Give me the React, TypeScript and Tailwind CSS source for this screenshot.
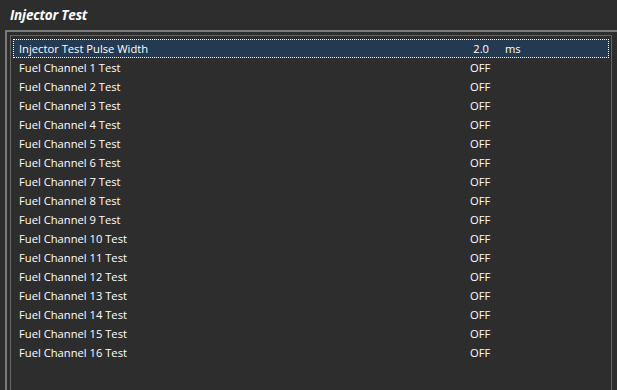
const rows: { label: string; value: string; unit?: string }[] = [
  { label: 'Injector Test Pulse Width', value: '2.0', unit: 'ms' },
  ...Array.from({ length: 16 }, (_, i) => ({
    label: `Fuel Channel ${i + 1} Test`,
    value: 'OFF'
  }))
]

export default function App() {
  return (
    <div
      className="h-[390px] w-[617px] overflow-hidden bg-[#2d2d2d] text-white"
      style={{ fontFamily: '"Open Sans", "Noto Sans", sans-serif' }}
    >
      <div className="flex h-[30px] items-center pl-[10px] text-[13.5px] font-bold italic tracking-[-0.2px]">
        Injector Test
      </div>
      <div className="ml-[5px] h-[360px] border-l-2 border-t-2 border-[#7a7a7a] pl-[3px] pt-[3px]">
        <div className="mr-[5px] h-full border border-b-0 border-[#646464] px-[2px] pt-[3px]">
          {rows.map((row, i) => (
            <div
              key={row.label}
              className={
                'flex h-[19px] items-center text-[11.2px] font-medium leading-none ' +
                (i === 0 ? 'border border-dotted border-white bg-[#243a52]' : 'border border-transparent')
              }
            >
              <span className="w-[440px] pl-[5px]">{row.label}</span>
              <span className={row.unit ? 'w-[35px] text-right' : 'w-[35px] pl-[16px]'}>{row.value}</span>
              {row.unit ? <span className="pl-[16px]">{row.unit}</span> : null}
            </div>
          ))}
        </div>
      </div>
    </div>
  )
}
